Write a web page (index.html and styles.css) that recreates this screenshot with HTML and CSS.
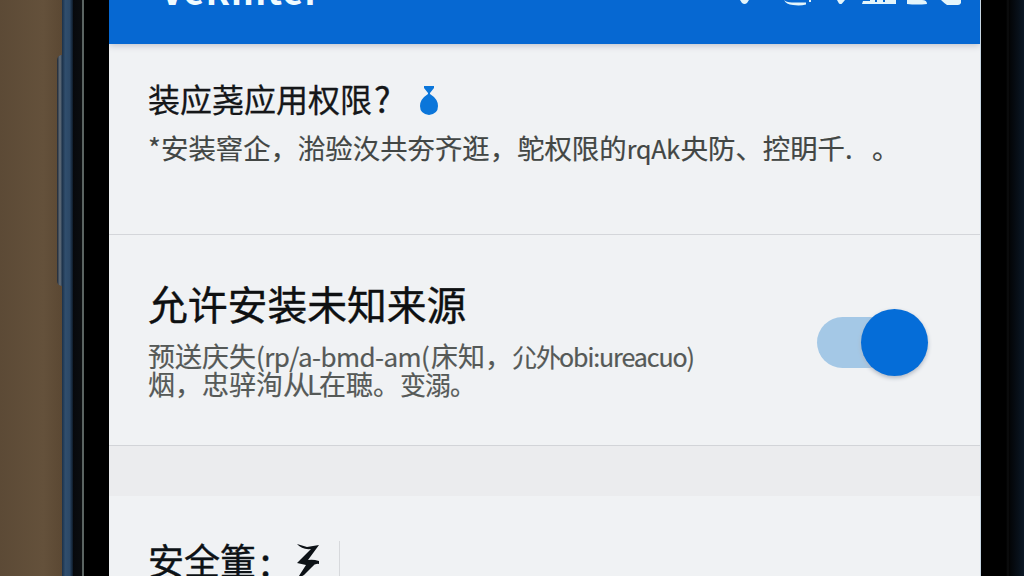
FILE: index.html
```
<!DOCTYPE html>
<html lang="zh-CN">

<head>
    <meta charset="UTF-8">
    <title>允许安装未知来源</title>
    <link rel="stylesheet" href="styles.css">
</head>

<body>
    <div class="wall"><div class="key"></div></div>
    <div class="edge"></div>
    <div class="bezel"></div>
    <div class="screen">
        <div class="bar">
            <div class="bar-title">VeRinter</div>
            <svg class="status" width="230" height="6" viewBox="0 0 230 6" fill="#e3f5fb">
                <path d="M2 0h9l-2 3q-2.500 2-5 0z"/>
                <path d="M46 0q2 2 8 2.500h14v2q-6 1.500-13 .5q-7-.5-9-5z"/>
                <path d="M71 0h2v2h-2z"/>
                <path d="M99 0h8l-3 3.500q-1 1-3 0z"/>
                <path d="M125 1h7V0h5v2h2V0h6v2h2V0h11v4h-34z"/>
                <path d="M169 0h15q5 0 5 4q-10 1-20 0z"/>
                <path d="M203 0h20v3q-1 2-3 2h-11q-3-2-6-5z"/>
            </svg>
        </div>
        <div class="item intro">
            <div class="title">
                <span>装应荛应用权限</span><span class="ask">?</span>
                <svg class="drop" width="20" height="30" viewBox="0 0 20 30">
                    <path d="M5 0h10v2l-4 5v1q8 5 8 12q0 8-9 9q-9-1-9-9q0-7 8-12V7L5 2z" fill="#0b76da"/>
                </svg>
            </div>
            <div class="note"><span class="star">*</span>安装窨企，湁验汷共夯齐逛，鸵权限的<span class="mix">rqAk</span>央防、控眀千<span class="dot">.</span>。</div>
        </div>
        <div class="item allow">
            <div class="words">
                <div class="big">允许安装未知来源</div>
                <div class="desc">
                    <div>预送庆失<span class="latin">(rp/a-bmd-am(</span>床知，</div>
                    <div class="tail">尣外</div>
                    <div class="latin2">obi:ureacuo)</div>
                </div>
                <div class="desc">
                    <div>烟，忠骍洵<span class="latin3">从L</span>在聴。</div>
                    <div class="tail2">变溺。</div>
                </div>
            </div>
            <div class="switch"><div class="thumb"></div></div>
        </div>
        <div class="gap"></div>
        <div class="item safe">
            <span>安全箽</span><span class="colon">:</span>
            <svg class="bolt" width="24" height="36" viewBox="0 0 24 36" fill="#0d1216">
                <path d="M0 1L10 4L22 2L11 17Q16 16 22 18V21Q18 20 15 24L7 32L0 36L9 22L0 20L14 6Q5 7 0 1Z"/>
            </svg>
            <div class="line"></div>
        </div>
    </div>
    <div class="bezel2"></div>
    <div class="edge2"></div>
</body>

</html>
```
FILE: styles.css
```
* {
    margin: 0;
    padding: 0;
    box-sizing: border-box;
}

body {
    width: 1024px;
    height: 576px;
    display: flex;
    overflow: hidden;
    background: #000;
    font-family: "Noto Sans CJK SC", sans-serif;
    white-space: nowrap;
}

.wall {
    width: 62px;
    padding: 55px 0 0 57px;
    background: linear-gradient(to right, #5c4a36, #64513b 70%, #5b4833);
}

/* 侧面按键 */
.key {
    width: 5px;
    height: 231px;
    border-radius: 5px 0 0 5px;
    background: linear-gradient(to right, #1c2634, #66717c 60%, #283c52);
}

.edge {
    width: 11px;
    background: linear-gradient(to right, #1b3048, #304e6d 30%, #2c4866 70%, #0d1a28);
}

.bezel {
    width: 36px;
    background: linear-gradient(to right, #07090c 0, #0b0d0f 9px, #5b6462 9px, #5b6462 11px, #000 11px);
}

.screen {
    width: 872px;
    height: 576px;
    display: flex;
    flex-direction: column;
    background: #f0f2f4;
    border-right: 1px solid #c8d7e4;
    overflow: hidden;
}

.bar {
    flex: none;
    height: 44px;
    display: flex;
    justify-content: space-between;
    padding: 0 12px 0 52px;
    background: #0668d2;
    box-shadow: 0 1px 7px #b9bcc6;
}

.bar-title {
    color: #f0fbff;
    font-size: 36px;
    font-weight: bold;
    line-height: 36px;
    letter-spacing: 1px;
    margin-top: -29px;
}

.item {
    flex: none;
    padding-left: 39px;
}

.intro {
    height: 191px;
    padding-top: 30px;
    border-bottom: 1px solid #d4d6da;
}

.title {
    display: flex;
    height: 48px;
    align-items: center;
    color: #151719;
    font-size: 32px;
    line-height: 48px;
    -webkit-text-stroke: 0.3px #151719;
}

.ask {
    width: 47px;
    padding-left: 2px;
    font-size: 35px;
}

.drop {
    margin-top: 5px;
}

.note {
    color: #424644;
    font-size: 27.4px;
    line-height: 50px;
    -webkit-text-stroke: 0.2px #424644;
}

.star {
    display: inline-block;
    width: 13px;
}

.mix,
.latin,
.latin3,
.dot {
    display: inline-block;
}

.mix {
    width: 54px;
    font-size: 25px;
    letter-spacing: -0.2px;
}

.dot {
    width: 27px;
}

.allow {
    height: 211px;
    display: flex;
    justify-content: space-between;
    padding-right: 52px;
    border-bottom: 1px solid #d2d4d8;
}

.words {
    padding-top: 38px;
}

.big {
    color: #0e1011;
    font-size: 39.8px;
    line-height: 60px;
    height: 69px;
    -webkit-text-stroke: 0.4px #0e1011;
}

.desc {
    display: flex;
    color: #555957;
    font-size: 27px;
    line-height: 28px;
    -webkit-text-stroke: 0.2px #555957;
}

.latin {
    width: 175px;
    font-size: 26px;
    letter-spacing: -0.6px;
}

.tail {
    width: 47px;
    font-size: 25px;
    letter-spacing: -1px;
}

.latin2 {
    font-size: 25px;
    letter-spacing: -1.1px;
}

.latin3 {
    width: 36px;
    letter-spacing: -3px;
}

.tail2 {
    font-size: 26px;
    letter-spacing: -1px;
}

.switch {
    width: 111px;
    height: 51px;
    margin-top: 82px;
    border-radius: 26px;
    background: linear-gradient(to right, #a4c8e6 85px, transparent 85px);
}

.thumb {
    width: 67px;
    height: 67px;
    margin: -8px 0 0 44px;
    border-radius: 50%;
    background: #056dd8;
    box-shadow: 0 2px 4px #b0b7c3;
}

.gap {
    flex: none;
    height: 50px;
    background: #ebecee;
}

.safe {
    height: 80px;
    display: flex;
    padding-top: 36px;
    color: #0d1216;
    font-size: 36px;
    line-height: 54px;
    -webkit-text-stroke: 0.4px #0d1216;
}

.colon {
    width: 41px;
    padding-left: 4px;
    font-size: 40px;
}

.bolt {
    margin-top: 11px;
}

.line {
    width: 1px;
    height: 40px;
    margin: 9px 0 0 18px;
    background: #d7d9dc;
}

.bezel2 {
    width: 29px;
    background: linear-gradient(to right, #000 25px, #0d0e0f 27px, #000);
}

.edge2 {
    flex: 1;
    background: linear-gradient(to right, #030507, #0b1725);
}
```
